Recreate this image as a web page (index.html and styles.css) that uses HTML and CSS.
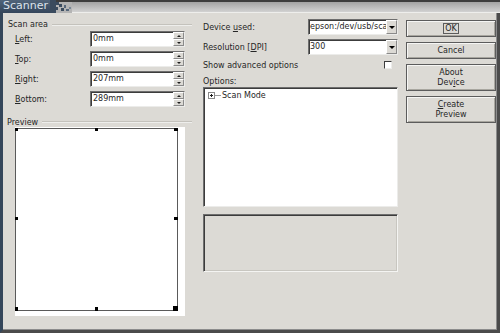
FILE: index.html
```html
<!DOCTYPE html>
<html lang="en">

<head>
  <meta charset="UTF-8">
  <meta name="viewport" content="width=device-width, initial-scale=1.0">
  <title>Scanner</title>
  <link rel="stylesheet" href="styles.css">
</head>

<body>
  <div class="window">
    <div class="titlebar">
      <div class="title-tab">Scanner</div>
      <svg class="title-deco" width="22" height="13" viewBox="0 0 22 13">
        <rect x="0" y="0" width="22" height="13" fill="#b4b4b4" />
        <rect x="0" y="0" width="22" height="2" fill="#3c3c3c" />
        <rect x="0" y="0" width="6" height="13" fill="#3a4b5e" />
        <rect x="6" y="2" width="3" height="3" fill="#3a4b5e" />
        <rect x="6" y="7" width="2" height="3" fill="#3a4b5e" />
        <rect x="9" y="4" width="3" height="3" fill="#3a4b5e" />
        <rect x="11" y="8" width="3" height="3" fill="#3a4b5e" />
        <rect x="14" y="5" width="2" height="3" fill="#56677a" />
        <rect x="16" y="9" width="3" height="2" fill="#56677a" />
        <rect x="19" y="7" width="2" height="2" fill="#7a8896" />
      </svg>
      <div class="title-fill"></div>
    </div>

    <div class="frame">
      <div class="left-col">
        <div class="group-title"><span>Scan area</span></div>

        <div class="field-row first">
          <label><u>L</u>eft:</label>
          <div class="spin">
            <span class="spin-text">0mm</span>
            <span class="spin-btns"><i class="up"></i><i class="down"></i></span>
          </div>
        </div>
        <div class="field-row">
          <label><u>T</u>op:</label>
          <div class="spin">
            <span class="spin-text">0mm</span>
            <span class="spin-btns"><i class="up"></i><i class="down"></i></span>
          </div>
        </div>
        <div class="field-row">
          <label><u>R</u>ight:</label>
          <div class="spin">
            <span class="spin-text">207mm</span>
            <span class="spin-btns"><i class="up"></i><i class="down"></i></span>
          </div>
        </div>
        <div class="field-row">
          <label><u>B</u>ottom:</label>
          <div class="spin">
            <span class="spin-text">289mm</span>
            <span class="spin-btns"><i class="up"></i><i class="down"></i></span>
          </div>
        </div>

        <div class="group-title preview-title"><span>Preview</span></div>
        <div class="preview">
          <svg width="170" height="189" viewBox="0 0 170 189">
            <rect x="0" y="0" width="170" height="189" fill="#fff" />
            <rect x="0.5" y="1.5" width="162" height="182" fill="none" stroke="#5a5a5a" />
            <rect x="0" y="1" width="3" height="3" fill="#000" />
            <rect x="80" y="1" width="3" height="3" fill="#000" />
            <rect x="159" y="1" width="4" height="3" fill="#000" />
            <rect x="0" y="90" width="3" height="3" fill="#000" />
            <rect x="159" y="90" width="4" height="3" fill="#000" />
            <rect x="0" y="180" width="3" height="4" fill="#000" />
            <rect x="80" y="180" width="3" height="4" fill="#000" />
            <rect x="158" y="179" width="5" height="5" fill="#000" />
          </svg>
        </div>
      </div>

      <div class="mid-col">
        <div class="mid-row">
          <span>Device <u>u</u>sed:</span>
          <div class="combo">
            <span class="combo-text">epson:/dev/usb/sca</span>
            <span class="combo-btn"></span>
          </div>
        </div>
        <div class="mid-row second">
          <span>Resolution [<u>D</u>PI]</span>
          <div class="combo">
            <span class="combo-text">300</span>
            <span class="combo-btn"></span>
          </div>
        </div>
        <div class="mid-row check-row">
          <span>Show advanced options</span>
          <span class="checkbox"></span>
        </div>
        <div class="options-label">Options:</div>
        <div class="listbox">
          <div class="tree-item">
            <span class="expander"></span>
            <span class="tree-line"></span>
            <span>Scan Mode</span>
          </div>
        </div>
        <div class="info-frame"></div>
      </div>

      <div class="btn-col">
        <button class="btn ok"><span class="focus">OK</span></button>
        <button class="btn">Cancel</button>
        <button class="btn tall">About<br>Dev<u>i</u>ce</button>
        <button class="btn tall"><u>C</u>reate<br>Preview</button>
      </div>
    </div>
  </div>
</body>

</html>
```

FILE: styles.css
```css
body {
  margin: 0;
  font-family: 'DejaVu Sans', sans-serif;
  font-size: 8px;
  color: #262626;
  background-color: #dcdad5;
}

.window {
  width: 500px;
  height: 333px;
  display: flex;
  flex-direction: column;
  overflow: hidden;
}

/* title bar */
.titlebar {
  height: 13px;
  display: flex;
  flex-shrink: 0;
}

.title-tab {
  width: 47px;
  padding-left: 3px;
  font-size: 11px;
  line-height: 12px;
  color: #dbe3ec;
  background: linear-gradient(#50647a, #34455a);
}

.title-deco {
  display: block;
}

.title-fill {
  flex: 1;
  background: linear-gradient(#3c3c3c 0, #3c3c3c 2px, #a2a2a2 2px, #d2d2d2 12px, #eeeeec 12px);
}

/* window body */
.frame {
  flex: 1;
  display: flex;
  border-left: 3px solid #34465a;
  border-right: 3px solid #4b4b4b;
  border-bottom: 3px solid #4b4b4b;
  box-shadow: inset -1px -1px #8c8c8c;
  padding: 6px 1px 0 4px;
}

.left-col {
  width: 188px;
  display: flex;
  flex-direction: column;
}

.group-title {
  display: flex;
  align-items: center;
  height: 11px;
  padding-left: 1px;
}

.group-title::after {
  content: "";
  flex: 1;
  height: 1px;
  margin: 0 3px 0 4px;
  background: #c4c2bc;
  border-bottom: 1px solid #eeeeec;
}

.field-row {
  display: flex;
  align-items: center;
  height: 16px;
  margin-top: 4px;
  padding-left: 8px;
}

.field-row.first {
  margin-top: 1px;
}

.field-row label {
  width: 75px;
}

.spin {
  width: 95px;
  height: 16px;
  box-sizing: border-box;
  display: flex;
  background: #fff;
  border: 1px solid;
  border-color: #6e6e6e #ececea #ececea #6e6e6e;
  box-shadow: inset 1px 1px #3c3c3c;
}

.spin-text {
  flex: 1;
  padding-left: 2px;
  line-height: 14px;
}

.spin-btns {
  width: 11px;
  display: flex;
  flex-direction: column;
  background: #dcdad5;
}

.spin-btns i {
  flex: 1;
  display: flex;
  align-items: center;
  justify-content: center;
  border: 1px solid;
  border-color: #fff #8a8a8a #8a8a8a #fff;
}

.spin-btns .up::after,
.spin-btns .down::after {
  content: "";
  border-left: 2px solid transparent;
  border-right: 2px solid transparent;
}

.spin-btns .up::after {
  border-bottom: 2px solid #1c1c1c;
}

.spin-btns .down::after {
  border-top: 2px solid #1c1c1c;
}

.preview-title {
  margin-top: 10px;
  padding-left: 0;
  height: 10px;
}

.preview {
  margin-left: 8px;
  height: 189px;
}

.preview svg {
  display: block;
}

/* middle column */
.mid-col {
  width: 195px;
  margin-left: 8px;
  display: flex;
  flex-direction: column;
}

.mid-row {
  display: flex;
  align-items: center;
  justify-content: space-between;
  height: 16px;
}

.mid-row.second {
  margin-top: 4px;
}

.check-row {
  margin-top: 3px;
  height: 14px;
}

.combo {
  width: 90px;
  height: 16px;
  box-sizing: border-box;
  display: flex;
  background: #fff;
  border: 1px solid;
  border-color: #6e6e6e #ececea #ececea #6e6e6e;
  box-shadow: inset 1px 1px #3c3c3c;
}

.combo-text {
  flex: 1;
  padding-left: 1px;
  line-height: 14px;
  white-space: nowrap;
  overflow: hidden;
}

.combo-btn {
  width: 11px;
  flex-shrink: 0;
  display: flex;
  align-items: center;
  justify-content: center;
  background: #dcdad5;
  border: 1px solid;
  border-color: #fff #8a8a8a #8a8a8a #fff;
  box-sizing: border-box;
}

.combo-btn::after {
  content: "";
  border-left: 3px solid transparent;
  border-right: 3px solid transparent;
  border-top: 3px solid #000;
}

.checkbox {
  width: 8px;
  height: 8px;
  box-sizing: border-box;
  margin-right: 6px;
  background: #fff;
  border: 1px solid;
  border-color: #3c3c3c #ececea #ececea #3c3c3c;
}

.options-label {
  height: 11px;
  line-height: 11px;
  margin-top: 4px;
}

.listbox {
  height: 120px;
  box-sizing: border-box;
  background: #fff;
  border: 1px solid;
  border-color: #6e6e6e #ececea #ececea #6e6e6e;
  box-shadow: inset 1px 1px #3c3c3c;
  padding: 2px 0 0 4px;
}

.tree-item {
  display: flex;
  align-items: center;
  height: 10px;
}

.expander {
  width: 5px;
  height: 5px;
  border: 1px solid #8a8a8a;
  position: relative;
  background: #fff;
}

.expander::before,
.expander::after {
  content: "";
  position: absolute;
  background: #1c1c1c;
}

.expander::before {
  left: 1px;
  top: 2px;
  width: 3px;
  height: 1px;
}

.expander::after {
  left: 2px;
  top: 1px;
  width: 1px;
  height: 3px;
}

.tree-line {
  width: 6px;
  height: 0;
  border-top: 1px solid #9a9a9a;
  margin-right: 1px;
}

.info-frame {
  margin-top: 7px;
  height: 58px;
  box-sizing: border-box;
  border: 1px solid;
  border-color: #6e6e6e #f4f4f2 #f4f4f2 #6e6e6e;
  box-shadow: inset 1px 1px #3c3c3c, inset -1px -1px #c8c6c0;
}

/* buttons */
.btn-col {
  width: 90px;
  margin-left: 8px;
  display: flex;
  flex-direction: column;
  gap: 5px;
  padding-top: 1px;
}

.btn {
  height: 17px;
  padding: 0;
  font-family: 'DejaVu Sans', sans-serif;
  font-size: 8px;
  color: #262626;
  background: #dcdad5;
  border: 1px solid #5c5c5c;
  box-shadow: inset 1px 1px #f6f6f4, inset -1px -1px #a8a69f;
  line-height: 10px;
}

.btn.tall {
  height: 27px;
}

.focus {
  border: 1px solid #5c5c5c;
  padding: 0 1px;
}
```
